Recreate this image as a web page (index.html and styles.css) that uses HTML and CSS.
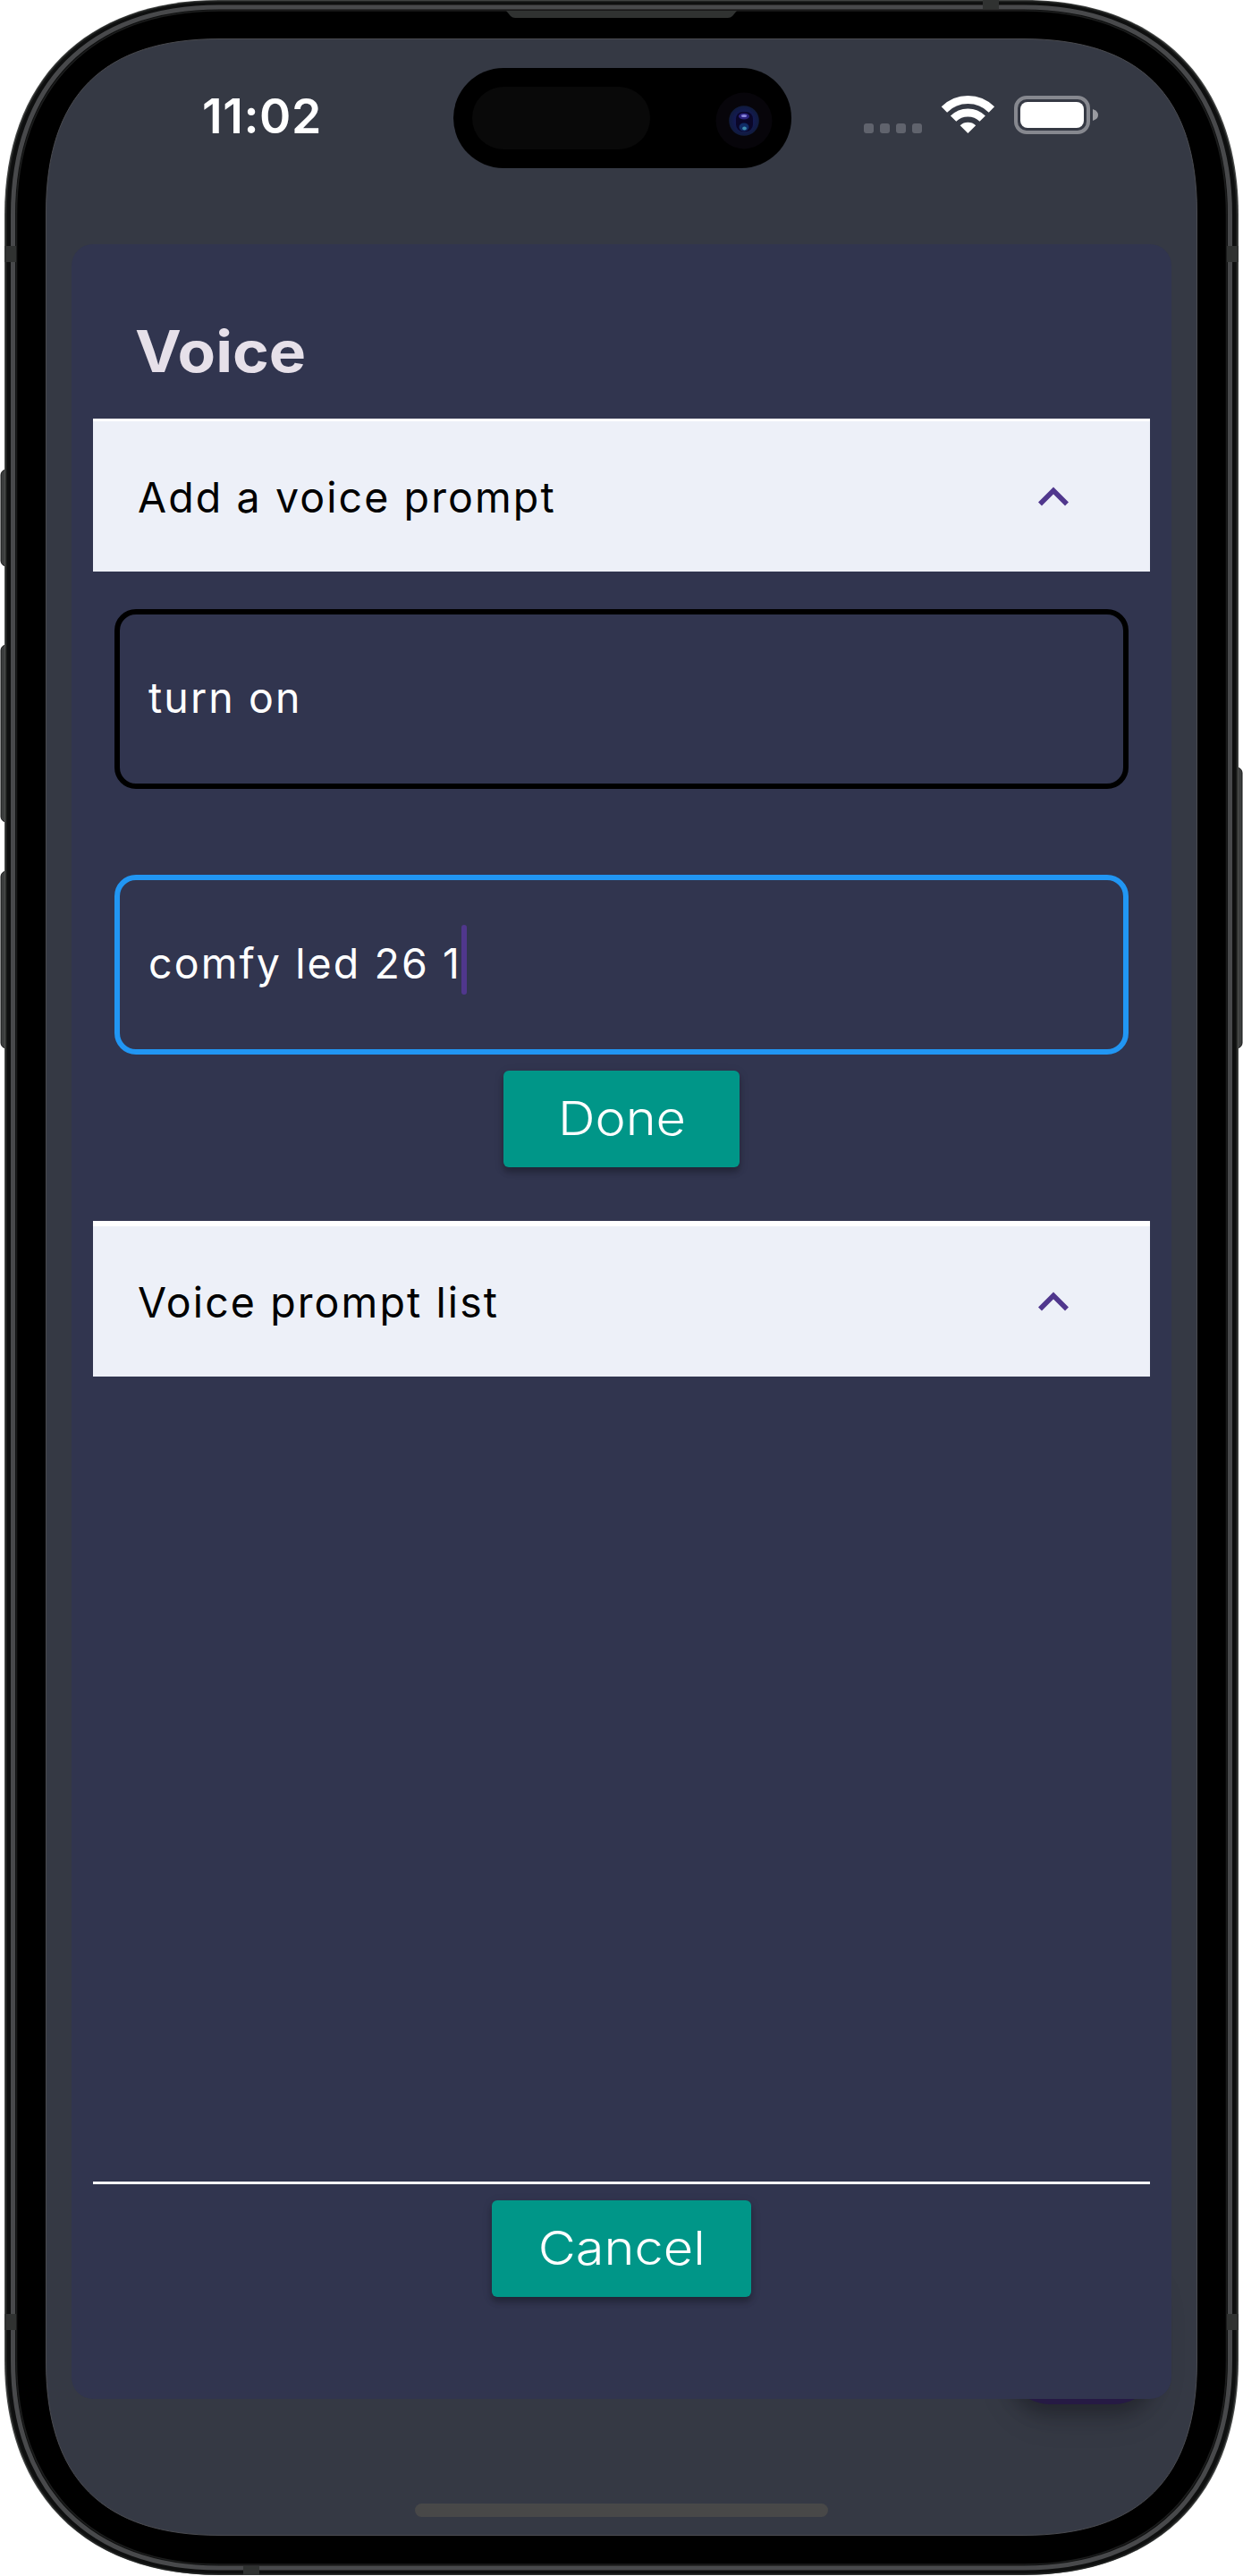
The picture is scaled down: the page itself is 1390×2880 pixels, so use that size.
FILE: index.html
```html
<!DOCTYPE html>
<html lang="en">
<head>
<meta charset="utf-8">
<title>Voice</title>
<link rel="stylesheet" href="styles.css">
</head>
<body>
<div class="phone">
  <svg class="frame" width="1390" height="2880" viewBox="0 0 1390 2880" aria-hidden="true">
    <g fill="#3c3e3e" stroke="#151616" stroke-width="1">
      <rect x="1" y="525" width="14" height="108" rx="6"/>
      <rect x="1" y="721" width="14" height="198" rx="6"/>
      <rect x="1" y="974" width="14" height="198" rx="6"/>
      <rect x="1375" y="858" width="14" height="314" rx="6"/>
    </g>
    <path fill="#4a4c4b" d="M5 240C5 90 95 0 245 0H1145C1295 0 1385 90 1385 240V2639C1385 2789 1295 2879 1145 2879H245C95 2879 5 2789 5 2639Z"/>
    <path fill="#0e0f0f" stroke="#202221" stroke-width="1.5" d="M7 240C7 91 96 1.500 245 1.500H1145C1294 1.500 1383 91 1383 240V2639C1383 2788 1294 2878 1145 2878H245C96 2878 7 2788 7 2639Z"/>
    <path fill="none" stroke="#48494b" stroke-width="5" d="M14.500 240C14.500 95 100 8 245 8H1145C1290 8 1375.500 95 1375.500 240V2639C1375.500 2784 1290 2871 1145 2871H245C100 2871 14.500 2784 14.500 2639Z"/>
    <path fill="#000" stroke="#1c1d1d" stroke-width="1.500" d="M18.500 240C18.500 98 103 12 245 12H1145C1287 12 1371.500 98 1371.500 240V2639C1371.500 2781 1287 2867 1145 2867H245C103 2867 18.500 2781 18.500 2639Z"/>
    <g fill="#303231">
      <path d="M5 275h13v18H5zM5 2587h13v18H5zM1372 275h13v18h-13zM1372 2587h13v18h-13zM1099 0h18v10h-18zM272 2869h18v10h-18z"/>
      <path d="M566 12H824L819 18Q817 20 814 20H576Q573 20 571 18Z"/>
    </g>
    <path fill="#353944" stroke="#4a4b50" stroke-width="1" d="M51.500 238C51.500 107 115 43.500 246 43.500H1144C1275 43.500 1338.500 107 1338.500 238V2640C1338.500 2771 1275 2834.500 1144 2834.500H246C115 2834.500 51.500 2771 51.500 2640Z"/>
  </svg>

  <main class="screen">
    <header class="status">
      <time class="clock">11:02</time>
      <svg class="island" width="378" height="112" viewBox="0 0 378 112" aria-hidden="true">
        <defs>
          <radialGradient id="lens"><stop offset="0" stop-color="#12103c"/><stop offset=".6" stop-color="#131a52"/><stop offset="1" stop-color="#101b3c"/></radialGradient>
        </defs>
        <rect width="378" height="112" rx="56"/>
        <rect x="21" y="21" width="199" height="70" rx="35" fill="#090909"/>
        <circle cx="325" cy="59" r="31.500" fill="#07050a"/>
        <circle cx="325" cy="59" r="16.800" fill="url(#lens)"/>
        <rect x="316" y="49" width="19" height="22" rx="8" fill="#0a0628"/>
        <ellipse cx="325" cy="54" rx="6" ry="3.500" fill="#2c2380"/>
        <ellipse cx="325" cy="53.500" rx="3" ry="1.500" fill="#8a86dc"/>
        <ellipse cx="325" cy="66" rx="5.500" ry="4.500" fill="#102c66"/>
        <ellipse cx="325.500" cy="67.500" rx="2.300" ry="2" fill="#3f8dae"/>
      </svg>
      <svg class="indicators" width="263" height="44" viewBox="0 0 263 44" aria-hidden="true">
        <g fill="#60636d"><rect y="31" width="11" height="11" rx="3"/><rect x="18" y="31" width="11" height="11" rx="3"/><rect x="36" y="31" width="11" height="11" rx="3"/><rect x="54" y="31" width="11" height="11" rx="3"/></g>
        <g fill="none" stroke="#fff" stroke-width="9">
          <path d="M89.900 15.500A37.500 37.500 0 0 1 142.900 15.500"/>
          <path d="M100.100 25.700A23 23 0 0 1 132.700 25.700"/>
        </g>
        <path fill="#fff" d="M107.600 33.200A13 13 0 0 1 125.200 33.200L116.400 42Z"/>
        <rect x="170" y="2" width="81" height="39" rx="12" fill="none" stroke="#86888f" stroke-width="4"/>
        <rect x="175" y="7" width="71" height="29" rx="8" fill="#fff"/>
        <path fill="#9a9ba1" d="M256 15Q262 17 262 21.500T256 28Z"/>
      </svg>
    </header>

    <div class="fab"></div>
    <section class="dialog">
      <h1 class="title">Voice</h1>
      <div class="accordion"><span class="label">Add a voice prompt</span>
        <svg class="chevron" width="36" height="24" viewBox="0 0 36 24"><path d="M3 20.500 18 5.500 33 20.500"/></svg></div>
      <div class="fields">
        <div class="field"><span>turn on</span></div>
        <div class="field focused"><span>comfy led 26 1</span><i class="caret"></i></div>
      </div>
      <button class="button done"><span>Done</span></button>
      <div class="accordion list"><span class="label">Voice prompt list</span>
        <svg class="chevron" width="36" height="24" viewBox="0 0 36 24"><path d="M3 20.500 18 5.500 33 20.500"/></svg></div>
      <footer class="footer"><button class="button cancel"><span>Cancel</span></button></footer>
    </section>
    <div class="home"></div>
  </main>
</div>
</body>
</html>
```
FILE: styles.css
```css
* { box-sizing: border-box; }

body {
  margin: 0;
  background: #fff;
  font-family: Inter, "Liberation Sans", sans-serif;
}

.phone {
  position: relative;
  width: 1390px;
  height: 2880px;
  padding: 43px 51px 45px;
}

.frame {
  position: absolute;
  inset: 0;
}

.screen {
  position: relative;
  display: flex;
  flex-direction: column;
  align-items: center;
  height: 2792px;
}

.status {
  display: flex;
  align-items: flex-start;
  width: 100%;
  height: 230px;
  padding: 33px 0 0 175px;
}

.clock {
  width: 281px;
  margin-top: 22px;
  color: #fff;
  font-size: 53.5px;
  font-weight: 600;
  line-height: 64px;
  letter-spacing: .6px;
}

.indicators {
  margin: 31px 0 0 81px;
}

.fab {
  position: absolute;
  right: 45px;
  bottom: 147px;
  width: 168px;
  height: 168px;
  border-radius: 48px;
  background: #261a44;
  box-shadow: 0 12px 18px rgba(0, 0, 0, .22), 0 18px 36px rgba(0, 0, 0, .1);
}

.dialog {
  position: relative;
  display: flex;
  flex-direction: column;
  align-items: center;
  width: 1230px;
  height: 2409px;
  padding: 80px 24px 0;
  border-radius: 24px;
  background: #31354f;
}

.title {
  align-self: flex-start;
  height: 115px;
  margin: 0 0 0 47px;
  color: #e6e0e9;
  font-size: 64px;
  font-weight: 700;
  line-height: 80px;
  transform: scaleX(1.085);
  transform-origin: left;
}

.accordion {
  display: flex;
  align-items: center;
  justify-content: space-between;
  width: 100%;
  height: 171px;
  padding: 0 90px 0 50px;
  border-top: 3px solid #fff;
  background: #edf0f8;
  color: #000;
  font-size: 46.5px;
  font-weight: 370;
  letter-spacing: 2.1px;
}

.label {
  padding-top: 2px;
}

.accordion.list {
  height: 174px;
  margin-top: 60px;
  border-top-width: 6px;
}

.chevron {
  fill: none;
  stroke: #50378d;
  stroke-width: 5.6;
}

.fields {
  display: grid;
  gap: 96px;
  width: 100%;
  padding: 42px 24px 18px;
}

.field {
  display: flex;
  align-items: center;
  height: 201px;
  padding-left: 32px;
  border: 6px solid #000;
  border-radius: 24px;
  color: #fff;
  font-size: 46.5px;
  font-weight: 370;
  letter-spacing: 2.1px;
}

.field span {
  padding-bottom: 3px;
}

.field.focused {
  border-color: #2196f3;
}

.caret {
  width: 6px;
  height: 78px;
  margin-top: -11px;
  border-radius: 3px;
  background: #50378d;
}

.button {
  height: 108px;
  padding: 0 0 1px;
  border: 0;
  border-radius: 6px;
  background: #009688;
  box-shadow: 0 6px 6px rgba(0, 0, 0, .2), 0 3px 12px rgba(0, 0, 0, .14);
  color: #fff;
  font: 360 52px Inter, "Liberation Sans", sans-serif;
}

.button span {
  display: inline-block;
  transform: scaleX(1.11);
}

.done { width: 264px; }
.cancel { width: 290px; }

.footer {
  display: flex;
  justify-content: center;
  width: 100%;
  margin-top: auto;
  padding: 18px 0 114px;
  border-top: 3px solid #fff;
}

.home {
  width: 462px;
  height: 15px;
  margin-top: 117px;
  border-radius: 8px;
  background: #484848;
}
```
